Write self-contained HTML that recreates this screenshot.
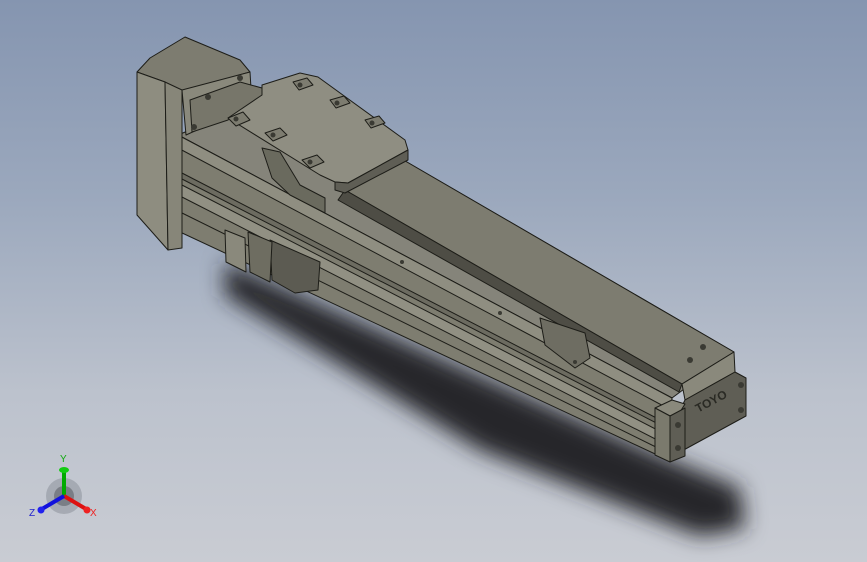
<!DOCTYPE html>
<html><head><style>
html,body{margin:0;padding:0;width:867px;height:562px;overflow:hidden}
body{background:linear-gradient(180deg,#8595b0 0%,#9ba8bd 35%,#bcc2cd 70%,#c9ccd3 100%);font-family:"Liberation Sans",sans-serif}
svg{position:absolute;left:0;top:0}
</style></head><body>
<svg width="867" height="562" viewBox="0 0 867 562">
<defs>
<filter id="b" x="-20%" y="-50%" width="140%" height="200%"><feGaussianBlur stdDeviation="11"/></filter>
</defs>
<polygon filter="url(#b)" fill="#25272b" points="225,262 660,455 740,488 745,528 700,536 480,450 300,340 225,295"/>
<g stroke="#1d1d18" stroke-width="1" stroke-linejoin="round">
<polygon fill="#85847a" points="178,135 250,105 400,158 734,352 672,398"/>
<polygon fill="#7d7c70" points="400,158 734,352 682,384 345,190"/>
<polygon fill="#4e4d45" points="345,190 682,384 679,392 338,200"/>
<!-- beam front -->
<polygon fill="#7e7d70" points="178,135 672,398 668,460 180,232"/>
<polygon fill="#8f8e81" points="178,135 672,398 671,410 178,148"/>
<polygon fill="#6c6b60" points="180,172 670,425 670,430 180,178"/>
<polygon fill="#919083" points="180,184 669,436 669,446 180,196"/>
<line x1="180" y1="212" x2="668" y2="453"/>
<!-- motor -->
<polygon fill="#7d7c70" points="137,72 150,58 185,37 240,60 250,72 180,92 165,82"/>
<polygon fill="#8e8d80" points="137,72 165,82 168,250 137,215"/>
<polygon fill="#878679" points="165,82 182,90 182,248 168,250"/>
<polygon fill="#8a897c" points="182,90 250,72 252,105 186,135"/>
<!-- box under -->
<polygon fill="#5c5b52" points="270,240 320,262 318,290 295,293 272,280"/>
<polygon fill="#8a897c" points="225,230 245,238 246,272 226,262"/>
<polygon fill="#6e6d61" points="248,232 272,242 270,282 250,272"/>
<!-- carriage -->
<polygon fill="#77766a" points="190,100 240,82 262,88 262,98 228,120 192,132"/>
<polygon fill="#8f8e82" points="228,118 262,95 262,85 300,73 318,77 405,140 408,150 348,183 335,182 320,175"/>
<polygon fill="#5f5e55" points="335,182 348,183 408,150 408,160 345,193 335,190"/>
<g fill="#7d7c70">
<polygon points="228,118 243,112 250,120 236,126"/>
<polygon points="265,133 280,128 287,135 273,141"/>
<polygon points="302,160 317,155 324,162 310,168"/>
<polygon points="293,82 307,78 313,85 299,90"/>
<polygon points="330,100 344,96 350,103 336,108"/>
<polygon points="365,120 379,116 385,123 371,128"/>
</g>
<polygon fill="#6a6a5e" points="262,148 280,152 300,185 325,198 325,213 290,195 272,178"/>
<polygon fill="#6e6d62" points="540,318 585,333 590,358 575,368 545,345"/>
<!-- end cap -->
<polygon fill="#8a897c" points="682,384 734,352 735,372 685,400"/>
<polygon fill="#5f5e55" points="685,400 735,372 746,378 746,416 680,452 680,410"/>
<polygon fill="#8a897c" points="655,408 672,400 685,404 680,412 670,416"/>
<polygon fill="#7b7a6d" points="655,408 670,416 670,462 655,455"/>
<polygon fill="#5f5e55" points="670,416 685,408 685,456 670,462"/>
</g>
<g fill="#3a3a33">
<circle cx="678" cy="425" r="3"/><circle cx="678" cy="448" r="3"/>
<circle cx="741" cy="385" r="3"/><circle cx="741" cy="410" r="3"/>
<circle cx="690" cy="360" r="3"/><circle cx="703" cy="347" r="3"/>
<circle cx="236" cy="119" r="2.5"/><circle cx="273" cy="135" r="2.5"/><circle cx="310" cy="162" r="2.5"/>
<circle cx="300" cy="85" r="2.5"/><circle cx="337" cy="103" r="2.5"/><circle cx="372" cy="123" r="2.5"/>
<circle cx="208" cy="97" r="3"/><circle cx="240" cy="78" r="3"/><circle cx="194" cy="127" r="3"/>
<circle cx="402" cy="262" r="2"/><circle cx="500" cy="313" r="2"/><circle cx="575" cy="362" r="2"/>
</g>
<text x="693" y="408" font-size="12" font-weight="bold" fill="#2a2a24" transform="rotate(-28 705 400)">TOYO</text>
<g>
<circle cx="64" cy="496" r="18" fill="#9ea3ab" opacity="0.8"/>
<circle cx="64" cy="496" r="10" fill="#6f737a" opacity="0.8"/>
<line x1="64" y1="496" x2="64" y2="470" stroke="#0a0" stroke-width="4"/>
<ellipse cx="64" cy="470" rx="5" ry="3" fill="#1c1"/>
<line x1="64" y1="496" x2="86" y2="509" stroke="#d11" stroke-width="4"/>
<circle cx="87" cy="510" r="3.5" fill="#e22"/>
<line x1="64" y1="496" x2="42" y2="509" stroke="#11d" stroke-width="4"/>
<circle cx="41" cy="510" r="3.5" fill="#22e"/>
<text x="60" y="462" font-size="10" fill="#1a1">Y</text>
<text x="90" y="516" font-size="10" fill="#e22">X</text>
<text x="29" y="516" font-size="10" fill="#22c">Z</text>
</g>
</svg>
</body></html>
